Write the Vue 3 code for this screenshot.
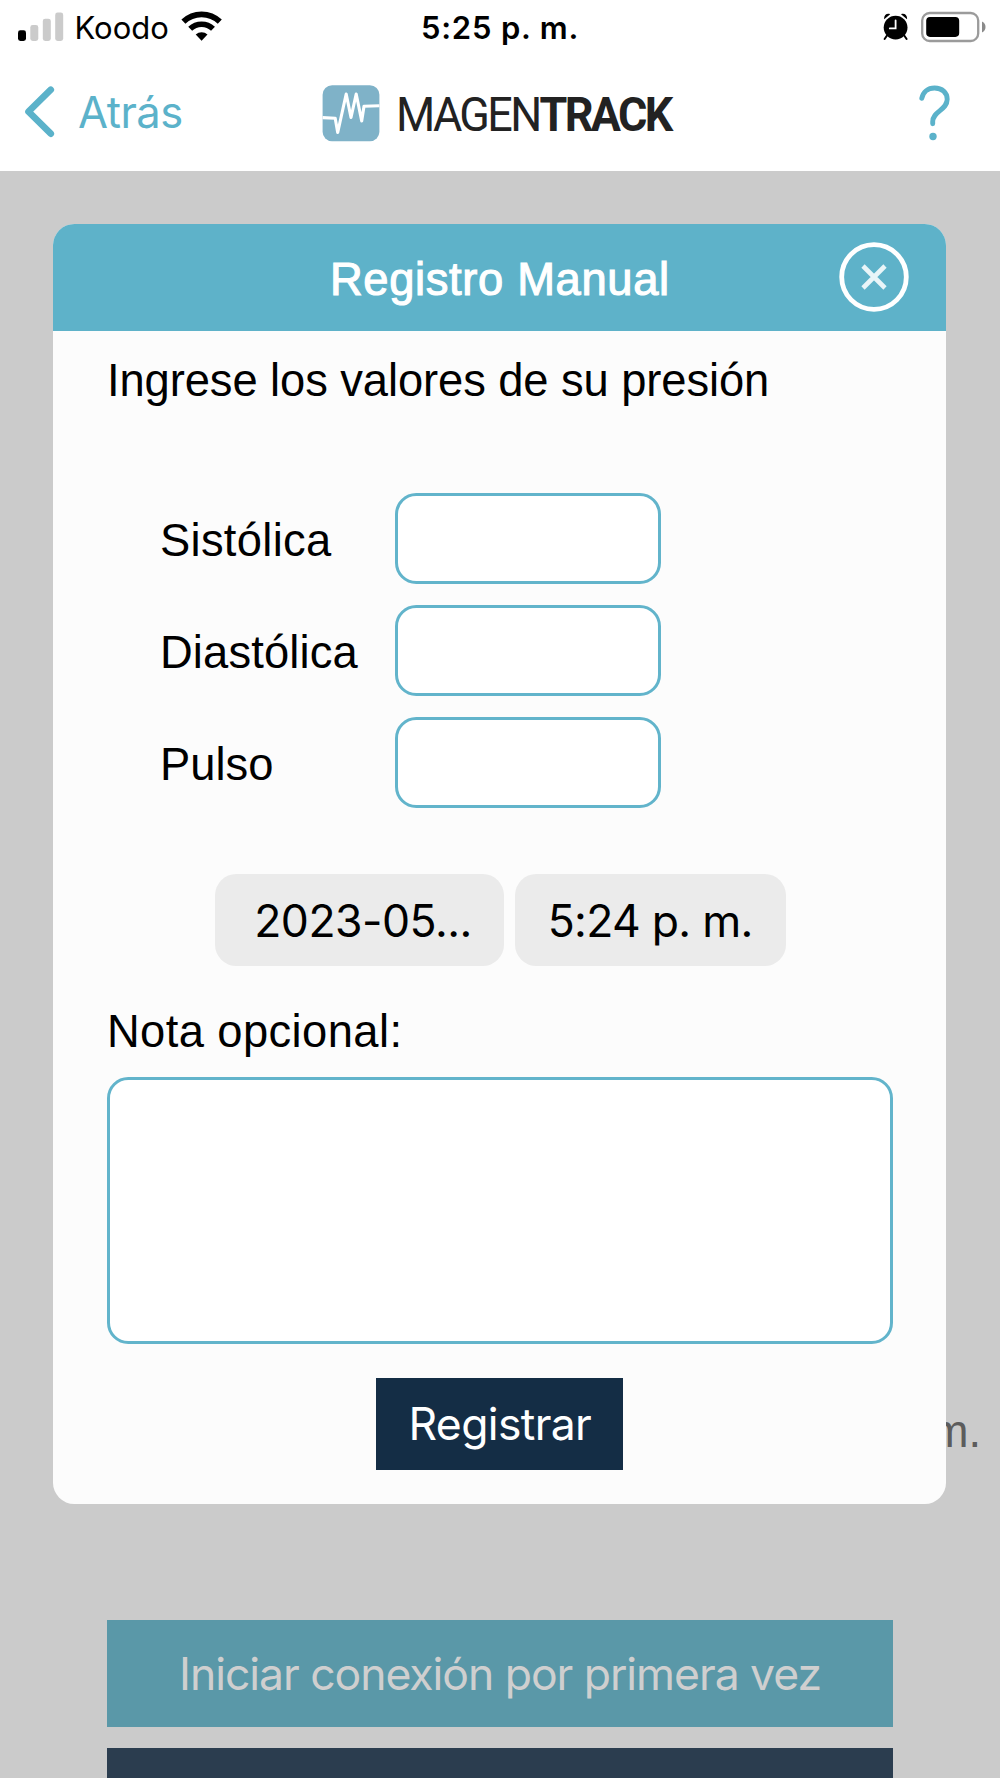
<script setup>
import { ref } from 'vue'

const fields = ref([
  { id: 'sistolica', label: 'Sistólica', value: '' },
  { id: 'diastolica', label: 'Diastólica', value: '' },
  { id: 'pulso', label: 'Pulso', value: '' },
])
const note = ref('')
</script>

<template>
  <div class="screen">
    <header class="top">
      <div class="status">
        <div class="carrier">
          <svg class="signal" width="46" height="30" viewBox="0 0 46 30">
            <rect x="0" y="18.3" width="8" height="10.7" rx="2.4" fill="#000" />
            <rect x="12.3" y="13" width="8" height="16" rx="2.4" fill="#cbcbcb" />
            <rect x="24.8" y="6.7" width="8" height="22.3" rx="2.4" fill="#cbcbcb" />
            <rect x="37.2" y="0.5" width="8" height="28.5" rx="2.4" fill="#cbcbcb" />
          </svg>
          <span class="carrier-name">Koodo</span>
          <svg class="wifi" width="42" height="32" viewBox="0 0 42 32">
            <g fill="none" stroke="#000">
              <path d="M2.4 11.6a26.3 26.3 0 0 1 36.4 0" stroke-width="5.8" />
              <path d="M9.2 18.8a16.4 16.4 0 0 1 22.8 0" stroke-width="5.6" />
            </g>
            <path d="M14.7 24.6a8.7 8.7 0 0 1 11.8 0L20.6 30.8z" fill="#000" />
          </svg>
        </div>
        <span class="clock">5:25 p. m.</span>
        <div class="indicators">
          <svg class="alarm" width="26" height="28" viewBox="0 0 26 28">
            <circle cx="12.6" cy="14.6" r="11.9" />
            <path d="M1.2 6.2C.6 2.6 3.6-.3 7.2 1.2zM24 6.2c.6-3.6-2.4-6.5-6-5z" />
            <path d="M4 22.5L1.6 26M21.2 22.5l2.4 3.5" stroke="#000" stroke-width="2" stroke-linecap="round" />
            <path d="M12.6 7.4v8H6.8" fill="none" stroke="#fff" stroke-width="1.8" stroke-linecap="round" />
          </svg>
          <svg class="battery" width="66" height="32" viewBox="0 0 66 32">
            <rect x="2.2" y="2" width="56" height="28" rx="7.5" fill="none" stroke="#9b9b9b" stroke-width="2.3" />
            <rect x="6.2" y="5.9" width="33" height="20" rx="3.8" fill="#000" />
            <path d="M62 10.5c4.7 1.8 4.7 9.2 0 11z" fill="#8a8a8a" />
          </svg>
        </div>
      </div>
      <nav class="nav">
        <a class="back">
          <svg width="32" height="54" viewBox="0 0 32 54">
            <path d="M27.8 5.7L5.5 27.7L27.8 49.7" fill="none" stroke="#5bb2ca" stroke-width="6.6" stroke-linecap="round" stroke-linejoin="round" />
          </svg>
          <span>Atrás</span>
        </a>
        <div class="brand">
          <svg width="58" height="57" viewBox="0 0 58 57">
            <rect x="0.6" y="0.3" width="56.8" height="56" rx="9.5" fill="#7fb2c8" />
            <path d="M0.6 32.6L13.2 33.3L15.7 47.5L24.2 9L29 32.5L34.200 9L39.700 36L42 21.200L57.400 20.800" fill="none" stroke="#fff" stroke-width="3.100" stroke-linejoin="round" />
          </svg>
          <span class="brand-name"><span>MAGEN</span><b>TRACK</b></span>
        </div>
        <svg class="help" width="34" height="58" viewBox="0 0 34 58">
          <path d="M3.800 13.300C5 7 9.700 3 16.600 3c7.400 0 12.600 4.600 12.600 11.300 0 11-14.500 11.500-14.500 22.500v1.900" fill="none" stroke="#5bb2ca" stroke-width="4.900" stroke-linecap="round" />
          <circle cx="15" cy="51.500" r="3.700" fill="#5bb2ca" />
        </svg>
      </nav>
    </header>

    <main class="content">
      <p class="behind">m.</p>
      <div class="behind-buttons">
        <button class="connect">Iniciar conexión por primera vez</button>
        <button class="next"></button>
      </div>

      <section class="modal">
        <div class="modal-head">
          <h1>Registro Manual</h1>
          <svg class="close" width="70" height="70" viewBox="0 0 70 70">
            <circle cx="35" cy="35" r="32.300" fill="none" stroke="#fff" stroke-width="4.800" />
            <path d="M24 24L46 46M46 24L24 46" stroke="#e9f5f8" stroke-width="4.600" />
          </svg>
        </div>
        <div class="modal-body">
          <p class="intro">Ingrese los valores de su presión</p>
          <div class="fields">
            <div v-for="f in fields" :key="f.id" class="field">
              <label :for="f.id" :class="f.id">{{ f.label }}</label>
              <input :id="f.id" v-model="f.value" />
            </div>
          </div>
          <div class="pickers">
            <span class="pill date">2023-05...</span>
            <span class="pill time">5:24 p. m.</span>
          </div>
          <label class="note-label" for="nota">Nota opcional:</label>
          <textarea id="nota" v-model="note"></textarea>
          <button class="submit">Registrar</button>
        </div>
      </section>
    </main>
  </div>
</template>

<style>
body {
  margin: 0;
}
</style>

<style scoped>
* {
  box-sizing: border-box;
}
.screen {
  display: flex;
  flex-direction: column;
  width: 1000px;
  height: 1778px;
  overflow: hidden;
  background: #cbcbcb;
  font-family: "Liberation Sans", Arial, sans-serif;
  font-size: 45.33px;
  color: #000;
}
svg {
  display: block;
  flex: none;
}
button {
  border: 0;
  padding: 0;
  font: inherit;
}
.top {
  flex: none;
  height: 171px;
  background: #fff;
}
.status {
  display: grid;
  grid-template-columns: 1fr auto 1fr;
  height: 54px;
  font-family: Inter, sans-serif;
  font-size: 31px;
  line-height: 56px;
}
.carrier {
  display: flex;
  padding-left: 18px;
}
.signal {
  margin-top: 12px;
}
.carrier-name {
  width: 106px;
  margin-left: 10.5px;
}
.wifi {
  margin-top: 10px;
}
.clock {
  font-weight: 600;
  letter-spacing: 0.8px;
}
.indicators {
  display: flex;
  justify-content: flex-end;
  padding-right: 14px;
}
.alarm {
  margin-top: 13px;
  margin-right: 11px;
}
.battery {
  margin-top: 11px;
}
.nav {
  display: flex;
  align-items: flex-start;
  height: 116px;
  padding: 30px 46px 0 23px;
}
.back {
  display: flex;
  width: 299px;
  font-family: Inter, sans-serif;
  font-size: 43.5px;
  line-height: 56px;
  letter-spacing: -0.5px;
  color: #5bb2ca;
}
.back span {
  margin-left: 23px;
}
.brand {
  display: flex;
  flex: 1;
  margin-top: 1px;
}
.brand-name {
  margin-left: 16px;
  font-family: Roboto, sans-serif;
  font-size: 47.5px;
  line-height: 60px;
  letter-spacing: -2.8px;
  color: #222;
  white-space: nowrap;
  transform: scaleX(0.945);
  transform-origin: left center;
}
.help {
  margin-top: 1px;
  margin-right: 2px;
}
.content {
  position: relative;
  flex: 1;
}
.behind {
  margin: 0;
  padding: 1231px 19px 0 0;
  text-align: right;
  line-height: 60px;
  color: #5c5c5c;
}
.behind-buttons {
  display: flex;
  flex-direction: column;
  gap: 21px;
  width: 786px;
  margin: 158px 0 0 107px;
}
.connect {
  height: 107px;
  background: #5a98a8;
  color: #cfcfcf;
  font-family: Inter, sans-serif;
  font-size: 44.5px;
  letter-spacing: -1.04px;
}
.next {
  height: 107px;
  background: #2b3d4f;
}
.modal {
  position: absolute;
  top: 53px;
  left: 53.4px;
  width: 893px;
  height: 1279.5px;
  border-radius: 21.3px;
  overflow: hidden;
  background: #fcfcfc;
}
.modal-head {
  display: grid;
  grid-template-columns: 1fr auto 1fr;
  height: 106.5px;
  background: #5eb2c9;
  color: #fff;
}
.modal-head h1 {
  grid-column: 2;
  margin: 0;
  font-size: 45.33px;
  font-weight: 400;
  line-height: 112px;
  letter-spacing: 0.65px;
  -webkit-text-stroke: 1.1px #fff;
}
.close {
  justify-self: end;
  margin: 18px 37px 0 0;
}
.modal-body {
  display: flex;
  flex-direction: column;
  padding: 0 53.6px;
}
.intro {
  margin: 20.5px 0 0;
  line-height: 60px;
  letter-spacing: -0.09px;
}
.fields {
  display: flex;
  flex-direction: column;
  gap: 21px;
  padding: 82px 53px 0;
}
.field {
  display: flex;
  align-items: center;
  height: 91px;
}
.field label {
  width: 235px;
  padding-top: 5px;
}
.sistolica {
  letter-spacing: 0.3px;
}
.diastolica {
  letter-spacing: 0.15px;
}
.field input {
  width: 266px;
  height: 91px;
}
input,
textarea {
  border: 3px solid #62b4cb;
  border-radius: 21.3px;
  background: #fff;
  padding: 0 16px;
  font: inherit;
  outline: none;
  resize: none;
}
.pickers {
  display: flex;
  gap: 11px;
  margin: 66px 0 0 108.3px;
  font-family: Inter, sans-serif;
  font-size: 44.5px;
}
.pill {
  height: 92px;
  border-radius: 21.3px;
  background: #ebebeb;
  text-align: center;
  line-height: 95px;
  white-space: nowrap;
}
.date {
  width: 288.6px;
  padding-left: 7px;
  letter-spacing: -0.5px;
}
.time {
  width: 270.7px;
  letter-spacing: -0.7px;
}
.note-label {
  margin-top: 35.5px;
  line-height: 60px;
  letter-spacing: 0.4px;
}
textarea {
  height: 267px;
  margin-top: 15px;
}
.submit {
  align-self: center;
  width: 247px;
  height: 92px;
  margin-top: 34px;
  background: #142d45;
  color: #fff;
  font-family: Inter, sans-serif;
  font-size: 44.5px;
  letter-spacing: -0.65px;
}
</style>
